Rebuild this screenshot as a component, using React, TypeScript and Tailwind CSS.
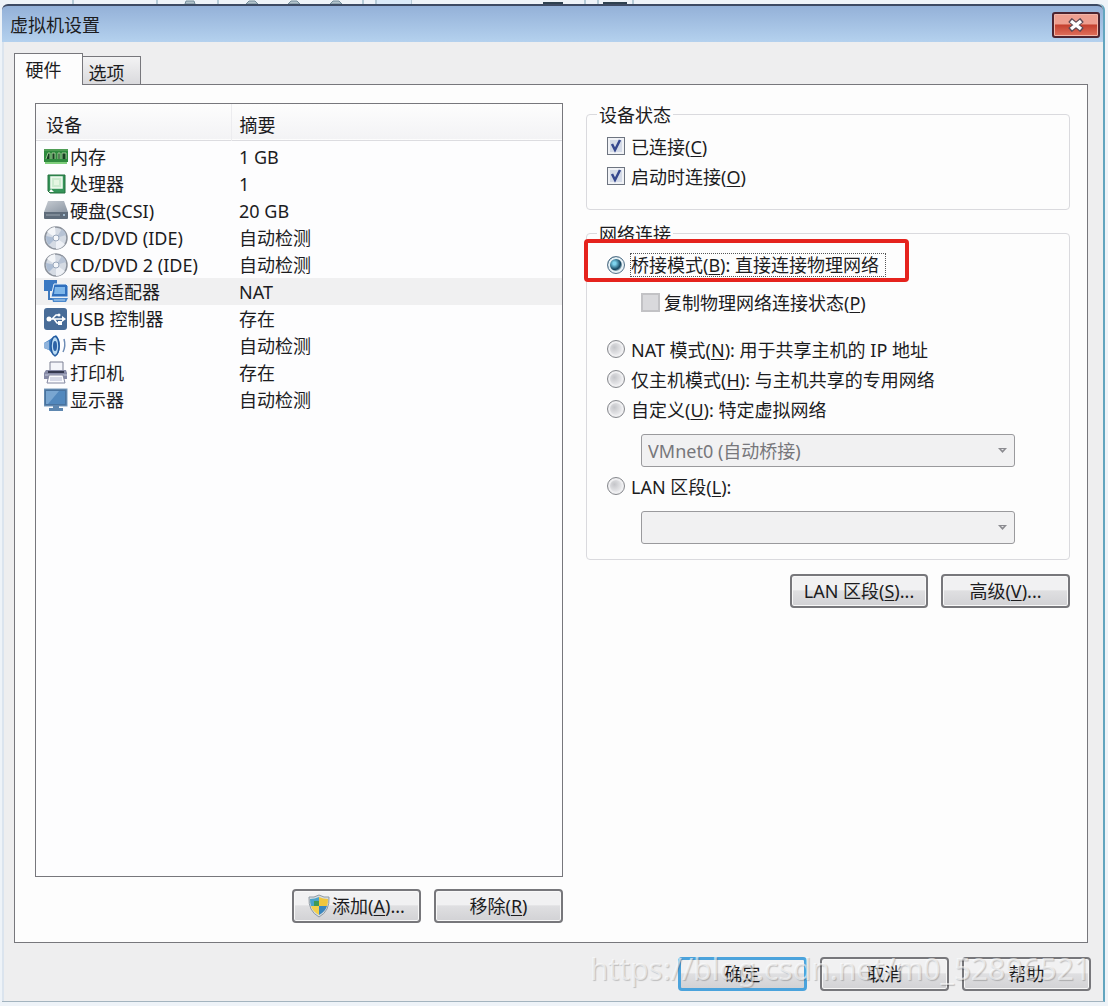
import type { ReactNode } from 'react';
import clsx from 'clsx';

const MemoryIcon = () => (
    <svg width="24" height="24" viewBox="0 0 24 24">
        <path d="M0 4h24v13h-24z" fill="#2f8a3e" />
        <path d="M0 4h24v2h-24z" fill="#4f9d55" />
        <path d="M1 17h22v2h-22z" fill="#7fce7c" />
        <path d="M2 14l2-6h2v6M8 14V8h3v6M14 14V8h2v6M18 14V8h4v6" fill="#173f22" stroke="#b9e0a8" strokeWidth="0.8" />
    </svg>
);

const CpuIcon = () => (
    <svg width="24" height="24" viewBox="0 0 24 24">
        <path d="M4 3h17v18H6l-2-2z" fill="#36945a" stroke="#22703c" />
        <rect x="7" y="5" width="11" height="11" fill="#cdebd0" stroke="#f3fbf2" strokeWidth="1.5" />
        <path d="M10 8h5v5h-5z" fill="#e6f6e2" />
        <path d="M5 20l2-3 3 3z" fill="#fff" />
    </svg>
);

const DiskIcon = () => (
    <svg width="24" height="24" viewBox="0 0 24 24">
        <defs>
            <linearGradient id="disk" x1="0" y1="0" x2="1" y2="1">
                <stop offset="0" stopColor="#c6cbd2" />
                <stop offset="1" stopColor="#8c96a3" />
            </linearGradient>
        </defs>
        <path d="M4 2h16l4 11H0z" fill="url(#disk)" />
        <path d="M0 13h24v6q0 1-1 1H1q-1 0-1-1z" fill="#5f6c7b" />
        <path d="M2 15h14v2H2z" fill="#7d8996" />
        <circle cx="20" cy="16" r="1" fill="#b6d3e8" />
    </svg>
);

const DiscIcon = () => (
    <svg width="24" height="24" viewBox="0 0 24 24">
        <circle cx="12" cy="12" r="11" fill="#d5dbe4" stroke="#8c929c" strokeWidth="1.5" />
        <path d="M12 12L3 6a11 11 0 0 1 8-5z" fill="#f4f6f9" />
        <path d="M12 12l9 6a11 11 0 0 1-9 5z" fill="#eef1f6" />
        <path d="M12 12L2 10q0 6 3 9z" fill="#adbdd3" />
        <path d="M12 12l10-3q-1-4-4-6z" fill="#b7c3d5" />
        <circle cx="12" cy="12" r="3" fill="#f5f7fa" stroke="#9aa8bc" />
    </svg>
);

const NetworkIcon = () => (
    <svg width="24" height="24" viewBox="0 0 24 24">
        <path d="M0 0h13v11H0z" fill="#3a78c2" />
        <path d="M5 11v8h5" fill="none" stroke="#3f79bd" strokeWidth="2" />
        <path d="M10 4h12l2 2v11H7z" fill="#2f6fbd" stroke="#e4f0fb" />
        <path d="M11 7h10v7H10z" fill="#7fb7ea" />
        <path d="M8 18h16l-2 4H9z" fill="#4b88cc" />
        <path d="M10 20h11" stroke="#b8d8f4" />
    </svg>
);

const UsbIcon = () => (
    <svg width="24" height="24" viewBox="0 0 24 24">
        <rect x="0" y="1" width="23" height="22" rx="3" fill="#486c98" />
        <g stroke="#fff" strokeWidth="1.5" fill="none">
            <path d="M5 12h14M8 12l4-4h3M10 12l3 4h3" />
        </g>
        <circle cx="5" cy="12" r="2.5" fill="#fff" />
        <circle cx="15" cy="8" r="1.5" fill="#fff" />
        <path d="M14 14h4v4h-4zM18 9l4 3-4 3z" fill="#fff" />
    </svg>
);

const SoundIcon = () => (
    <svg width="24" height="24" viewBox="0 0 24 24">
        <path d="M0 9l5-3L12 1q4 4 4 11t-5 11l-6-7-5-2z" fill="#3f7dc0" />
        <path d="M0 9l5-2v9l-5-2z" fill="#8fb3dc" />
        <ellipse cx="11" cy="12" rx="4" ry="9.5" fill="#b9daf3" stroke="#235a9e" strokeWidth="1.5" />
        <ellipse cx="11" cy="12" rx="2" ry="5" fill="#2c62a6" />
        <path d="M20 5q2 7-1 13" fill="none" stroke="#6d8cb5" strokeWidth="1.5" />
    </svg>
);

const PrinterIcon = () => (
    <svg width="24" height="24" viewBox="0 0 24 24">
        <path d="M6 1h13v9H6z" fill="#f4f5fa" stroke="#7c8094" />
        <path d="M2 9h20l1 3v6H0v-6z" fill="#8589a6" />
        <path d="M4 10h16v2H4z" fill="#34384f" />
        <path d="M1 14h22" stroke="#c5cadc" />
        <path d="M5 14h14l2 8H3z" fill="#fbfbfe" stroke="#8488a0" />
        <path d="M6 17h12M6 19h12" stroke="#b3b8d0" />
    </svg>
);

const DisplayIcon = () => (
    <svg width="24" height="24" viewBox="0 0 24 24">
        <rect x="0" y="1" width="23" height="17" fill="#49739f" stroke="#7b9cbc" />
        <path d="M2 3h19v13H2z" fill="#5288bd" />
        <path d="M2 3h13L4 16H2z" fill="#79a6d1" />
        <path d="M9 18h6v2h4v3H5v-3h4z" fill="#5e87b0" />
    </svg>
);

const ShieldIcon = () => (
    <svg width="22" height="24" viewBox="0 0 22 24">
        <path d="M11 1q5 3 10 2 1 14-10 20Q0 17 1 3q5 1 10-2z" fill="#d7dde2" stroke="#8f9aa3" />
        <path d="M11 3v9H3q-1-3-1-7 5 0 9-2z" fill="#4aa3c9" />
        <path d="M11 3v9h8q1-3 1-7-5 0-9-2z" fill="#f0c63c" />
        <path d="M3 12h8v9q-6-3-8-9z" fill="#f3cf4a" />
        <path d="M11 12h8q-2 6-8 9z" fill="#3a86bd" />
        <path d="M6 7h5v5H6z" fill="#3f9a55" />
    </svg>
);

const devices = [
    { name: '内存', summary: '1 GB', icon: <MemoryIcon /> },
    { name: '处理器', summary: '1', icon: <CpuIcon /> },
    { name: '硬盘(SCSI)', summary: '20 GB', icon: <DiskIcon /> },
    { name: 'CD/DVD (IDE)', summary: '自动检测', icon: <DiscIcon /> },
    { name: 'CD/DVD 2 (IDE)', summary: '自动检测', icon: <DiscIcon /> },
    { name: '网络适配器', summary: 'NAT', icon: <NetworkIcon />, selected: true },
    { name: 'USB 控制器', summary: '存在', icon: <UsbIcon /> },
    { name: '声卡', summary: '自动检测', icon: <SoundIcon /> },
    { name: '打印机', summary: '存在', icon: <PrinterIcon /> },
    { name: '显示器', summary: '自动检测', icon: <DisplayIcon /> },
];

const Key = ({ children }: { children: ReactNode }) => <span className="underline underline-offset-2">{children}</span>;

const Button = ({ children, primary, className }: { children: ReactNode; primary?: boolean; className?: string }) => (
    <button
        type="button"
        className={clsx(
            'flex h-[34px] items-center justify-center whitespace-nowrap rounded-[4px] bg-linear-to-b from-[#f1f1f2] from-45% via-[#dfdfe1] via-50% to-[#d2d2d5]',
            primary ? 'border-3 border-[#4ba3dc]' : 'border-2 border-[#77777b] shadow-[inset_0_0_0_1px_#f8f8f8]',
            className ?? 'w-[129px]',
        )}
    >
        {children}
    </button>
);

const Check = ({ id, children }: { id: string; children: ReactNode }) => (
    <div className="flex h-[30px] items-center gap-1.5">
        <span className="relative size-[18px]">
            <input
                id={id}
                type="checkbox"
                defaultChecked
                className="block size-[18px] appearance-none border border-[#6d7480] bg-[#d5dbe8] shadow-[inset_0_0_0_2px_#f0f2f6]"
            />
            <svg className="pointer-events-none absolute inset-0" width="18" height="18" viewBox="0 0 18 18">
                <path d="M5 7l3 6 5-10" fill="none" stroke="#36488f" strokeWidth="2.5" />
            </svg>
        </span>
        <label htmlFor={id} className="pt-0.5">{children}</label>
    </div>
);

const Radio = ({ id, checked, children }: { id: string; checked?: boolean; children: ReactNode }) => (
    <div className="relative flex h-[30px] items-center gap-1.5">
        <input
            id={id}
            type="radio"
            name="network"
            defaultChecked={checked}
            className="size-[18px] appearance-none rounded-full border border-[#85878c] bg-radial-[at_40%_40%] from-[#c4c5c9] to-[#f1f1f3] to-70% shadow-[inset_0_0_0_2px_#efeff1] checked:border-[#56738a] checked:from-[#7fd4ee] checked:from-10% checked:via-[#15455f] checked:via-45% checked:to-[#dcebf2] checked:to-65% checked:shadow-[inset_0_0_0_2px_#e6f1f6]"
        />
        <label
            htmlFor={id}
            className={clsx('whitespace-nowrap', checked ? 'h-[22px] pr-1.5 leading-[22px] outline outline-dotted outline-[#555]' : 'pt-0.5')}
        >
            {children}
        </label>
    </div>
);

const Select = ({ label, value }: { label: string; value: string }) => (
    <div className="relative ml-[34px] mr-[46px]">
        <select
            aria-label={label}
            disabled
            className="block h-[33px] w-full appearance-none rounded-[3px] border border-[#9a9a9d] bg-[#f1f1f2] px-1.5 text-[#77777b] opacity-100"
        >
            <option>{value}</option>
        </select>
        <svg className="pointer-events-none absolute right-2 top-3.5" width="9" height="6" viewBox="0 0 9 6">
            <path d="M0 0h9L4.5 5z" fill="#8b8b90" />
            <path d="M3 1h3L4.5 2.5z" fill="#e6e6e8" />
        </svg>
    </div>
);

const DeviceTable = () => (
    <div className="flex-1 border border-[#77777c] bg-[#fdfdfe]">
        <table className="w-full table-fixed border-collapse text-left">
            <thead>
                <tr className="h-9 border-b border-[#dcdce0] bg-linear-to-b from-[#fdfdfd] to-[#f3f3f5]">
                    <th className="w-[195px] border-r border-[#ececef] pb-0 pl-2.5 pt-1.5 font-normal">设备</th>
                    <th className="pb-0 pl-2 pt-1.5 font-normal">摘要</th>
                </tr>
            </thead>
            <tbody>
                <tr aria-hidden="true">
                    <td className="h-[3px] p-0" colSpan={2} />
                </tr>
                {devices.map(({ name, summary, icon, selected }) => (
                    <tr key={name} className={clsx('h-[27px]', selected && 'bg-[#f0f0f1]')}>
                        <td className="p-0 pl-2">
                            <div className="flex h-[27px] items-center gap-0.5 whitespace-nowrap">
                                {icon}
                                {name}
                            </div>
                        </td>
                        <td className="p-0 pl-2">{summary}</td>
                    </tr>
                ))}
            </tbody>
        </table>
    </div>
);

// Sliver of the parent window's toolbar above the dialog
const ToolbarEdge = () => (
    <svg className="block" width="640" height="4" viewBox="0 0 640 4">
        <path d="M71 0v4M155 0v4M216 0v4M361 0v4M374 0v4M409 0v4M583 0v4M596 0v4M631 0v4" stroke="#7fa3b5" />
        <path d="M375 0h34v4h-34z" fill="#dbeaf8" />
        <path d="M183 4l1-3h8l1 3zM244 4l3-3h6l3 3zM286 4l3-3h6l3 3zM328 4l3-3h6l3 3z" fill="#b3c3cc" stroke="#738c99" />
        <path d="M541 3h20M601 3h24" stroke="#2f4150" strokeWidth="2" />
    </svg>
);

const TitleBar = () => (
    <header className="flex h-[38px] items-start justify-between rounded-t-md border-t-2 border-[#3d4a63] bg-linear-to-b from-[#94b1d8] to-[#b4d1ee] pl-2 pr-[3px]">
        <h1 className="pt-[7px]">虚拟机设置</h1>
        <button
            type="button"
            aria-label="关闭"
            className="mt-1.5 flex h-[26px] w-12 items-center justify-center rounded-[3px] border-2 border-[#4d2430] bg-linear-to-b from-[#ee9f90] from-45% via-[#c4402f] via-50% to-[#e0705c] shadow-[inset_0_0_0_1px_#f2b5a8]"
        >
            <svg width="18" height="14" viewBox="0 0 18 14">
                <path d="M3 2l12 10M15 2L3 12" stroke="#5d4a55" strokeWidth="5.5" />
                <path d="M4 3l10 8M14 3L4 11" stroke="#fff" strokeWidth="3.5" />
            </svg>
        </button>
    </header>
);

const HardwarePanel = () => (
    <section className="mr-[3px] grid flex-1 grid-cols-[12fr_11fr] gap-x-[23px] border border-[#77777c] bg-[#fdfdfd] pb-[19px] pl-5 pr-[17px] pt-[18px]">
        <div className="flex flex-col">
            <DeviceTable />
            <div className="flex justify-end gap-[13px] pt-3">
                <Button>
                    <ShieldIcon />
                    <span className="pl-0.5">添加(<Key>A</Key>)...</span>
                </Button>
                <Button>移除(<Key>R</Key>)</Button>
            </div>
        </div>
        <div>
            <fieldset className="h-[107px] rounded-[4px] border border-[#dadade] pl-5">
                <legend className="-ml-2.5 px-0.5 pt-0.5 leading-5">设备状态</legend>
                <div className="pt-1.5">
                    <Check id="connected">已连接(<Key>C</Key>)</Check>
                    <Check id="power-on">启动时连接(<Key>O</Key>)</Check>
                </div>
            </fieldset>
            <fieldset className="mt-3 rounded-[4px] border border-[#dadade] pb-[15px] pl-5 pr-2">
                <legend className="-ml-2.5 px-0.5 pt-0.5 leading-5">网络连接</legend>
                <div className="relative pt-1.5">
                    <div className="absolute -left-[23px] -top-[5px] h-[43px] w-[325px] rounded-[4px] border-4 border-[#e5231d] bg-[#fdfdfd]" />
                    <Radio id="bridged" checked>桥接模式(<Key>B</Key>): 直接连接物理网络</Radio>
                </div>
                <div className="flex h-[54px] items-center gap-1 pb-2.5 pl-[34px]">
                    <input id="replicate" type="checkbox" disabled className="size-[19px] appearance-none border-2 border-[#c2c2c5] bg-[#d9d9dc]" />
                    <label htmlFor="replicate" className="pt-0.5">复制物理网络连接状态(<Key>P</Key>)</label>
                </div>
                <Radio id="nat">NAT 模式(<Key>N</Key>): 用于共享主机的 IP 地址</Radio>
                <Radio id="host-only">仅主机模式(<Key>H</Key>): 与主机共享的专用网络</Radio>
                <Radio id="custom">自定义(<Key>U</Key>): 特定虚拟网络</Radio>
                <div className="pb-1 pt-2.5">
                    <Select label="特定虚拟网络" value="VMnet0 (自动桥接)" />
                </div>
                <Radio id="lan">LAN 区段(<Key>L</Key>):</Radio>
                <div className="pt-2.5">
                    <Select label="LAN 区段" value="" />
                </div>
            </fieldset>
            <div className="flex justify-end gap-[13px] pt-[14px]">
                <Button className="w-[138px]">LAN 区段(<Key>S</Key>)...</Button>
                <Button>高级(<Key>V</Key>)...</Button>
            </div>
        </div>
    </section>
);

export default function App() {
    return (
        <div className="flex min-h-screen flex-col bg-[#eef3f8] pb-1 pl-0.5 pr-[3px] font-['Noto_Sans','Noto_Sans_CJK_SC',sans-serif] text-[18px] leading-6 text-[#1c1c1e]">
            <ToolbarEdge />
            <main className="flex flex-1 flex-col rounded-t-md border-b border-r-2 border-b-[#a3b4bf] border-r-[#62a5bf] bg-[#eeeeef]">
                <TitleBar />
                <div className="flex flex-1 flex-col border-l-2 border-[#dbe4ee] pl-2.5 pr-3 pt-[11px]">
                    <nav role="tablist" className="relative -mb-px flex items-end">
                        <button type="button" role="tab" aria-selected="true" className="h-8 w-[69px] border border-b-0 border-[#77777c] bg-[#fdfdfd] pr-2.5">
                            硬件
                        </button>
                        <button type="button" role="tab" aria-selected="false" className="h-[29px] w-[58px] border border-l-0 border-[#77777c] bg-linear-to-b from-[#f3f3f4] to-[#dadadd] pr-2.5 pt-1">
                            选项
                        </button>
                    </nav>
                    <HardwarePanel />
                    <footer className="relative flex justify-end gap-[13px] pb-2.5 pt-[14px]">
                        <Button primary>确定</Button>
                        <Button>取消</Button>
                        <Button>帮助</Button>
                        <p className="pointer-events-none absolute right-0 top-2 whitespace-nowrap text-[30px] leading-9 text-white/60 [text-shadow:1px_1px_1px_#0003]">
                            https://blog.csdn.net/m0_52896521
                        </p>
                    </footer>
                </div>
            </main>
        </div>
    );
}
